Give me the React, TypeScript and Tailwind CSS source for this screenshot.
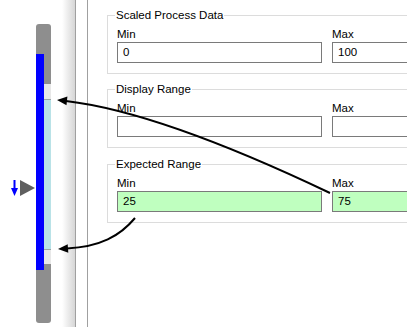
import React from "react";

function Group({ title, min, max, green, className }: { title: string; min: string; max: string; green?: boolean; className?: string }) {
  const inputCls = green ? "bg-[#bfffbf]" : "bg-white";
  return (
    <div className={"relative w-[450px] shrink-0 border border-[#dcdcdc] pt-[10px] pb-[10px] pl-[9px] " + (className ?? "")}>
      <div className="absolute -top-[9px] left-[7px] bg-white px-[1px] h-[16px] leading-[16px] text-black">{title}</div>
      <div className="flex gap-[10px]">
        <div className="flex flex-col w-[205px]">
          <div className="h-[16px] leading-[16px]">Min</div>
          <div className={"h-[21px] border border-[#7a7a7a] px-[5px] leading-[19px] " + inputCls}>{min}</div>
        </div>
        <div className="flex flex-col w-[205px]">
          <div className="h-[16px] leading-[16px]">Max</div>
          <div className={"h-[21px] border border-[#7a7a7a] px-[5px] leading-[19px] " + inputCls}>{max}</div>
        </div>
      </div>
    </div>
  );
}

export default function App() {
  return (
    <div className="relative w-[407px] h-[327px] overflow-hidden bg-white flex font-['Liberation_Sans',Arial,sans-serif] text-[11.5px] text-black">
      {/* left gauge column */}
      <div className="w-[62px] shrink-0 flex items-start pt-[24px] pl-[11px]">
        <svg width="25" height="16" viewBox="0 0 25 16" className="mt-[156px] shrink-0">
          <rect x="2.5" y="0" width="2" height="10" fill="#0000ff" />
          <polygon points="0,8 7,8 3.5,16" fill="#0000ff" />
          <polygon points="9,0 24,8 9,16" fill="#5f5f5f" />
        </svg>
        <svg width="15" height="299" viewBox="0 0 15 299" className="ml-[0px] shrink-0">
          <rect x="0" y="0" width="15" height="299" rx="3" fill="#8e8e8e" />
          <rect x="0" y="60" width="15" height="180" fill="#e8e8e8" />
          <rect x="0" y="75" width="15" height="150" fill="#b9e2e7" />
          <rect x="0" y="75" width="15" height="1" fill="#9aa4a6" />
          <rect x="0" y="225" width="15" height="1" fill="#9aa4a6" />
          <rect x="0" y="30" width="8" height="216" fill="#0000ff" />
        </svg>
      </div>
      {/* splitter */}
      <div className="w-[13px] shrink-0 bg-gradient-to-r from-white to-[#d6d6d6]" />
      <div className="w-[1px] shrink-0 bg-[#a0a0a0]" />
      <div className="w-[11px] shrink-0 bg-white" />
      <div className="w-[1px] shrink-0 bg-[#a0a0a0]" />
      {/* content */}
      <div className="flex-1 flex flex-col pt-[15px] pl-[19px] overflow-hidden">
        <Group title="Scaled Process Data" min="0" max="100" />
        <Group title="Display Range" min="" max="" className="mt-[15px]" />
        <Group title="Expected Range" min="25" max="75" green className="mt-[16px]" />
      </div>
      {/* arrows overlay */}
      <svg className="absolute inset-0 pointer-events-none" width="407" height="327" viewBox="0 0 407 327">
        <path d="M 330 193 Q 160 112 66 101" fill="none" stroke="#000" strokeWidth="2" />
        <polygon points="57,100 67.4,96.6 66.5,105.2" fill="#000" />
        <path d="M 135 218 C 120 236, 100 247, 67 248.4" fill="none" stroke="#000" strokeWidth="2" />
        <polygon points="58,249 68.3,252.8 67.7,244.2" fill="#000" />
      </svg>
    </div>
  );
}
